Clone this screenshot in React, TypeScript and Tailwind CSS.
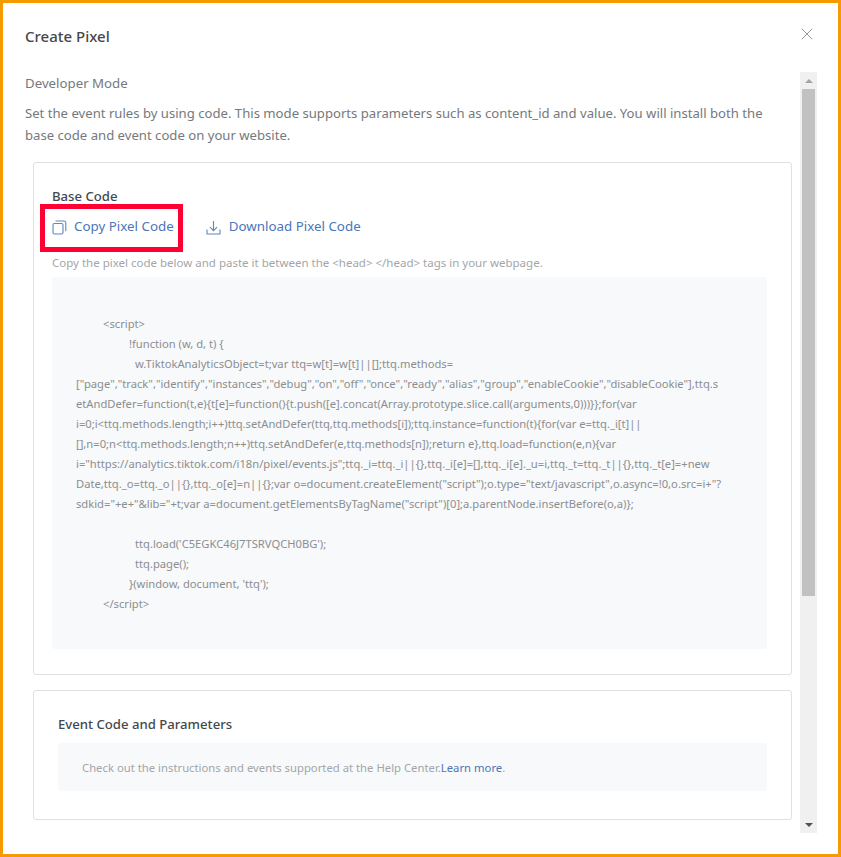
import { X } from 'lucide-react';

const codeLines: { text: string; indent: string }[] = [
  { text: '<script>', indent: 'pl-[51px]' },
  { text: '!function (w, d, t) {', indent: 'pl-[77px]' },
  { text: 'w.TiktokAnalyticsObject=t;var ttq=w[t]=w[t]||[];ttq.methods=', indent: 'pl-[83px]' },
  { text: '["page","track","identify","instances","debug","on","off","once","ready","alias","group","enableCookie","disableCookie"],ttq.s', indent: 'pl-[24px]' },
  { text: 'etAndDefer=function(t,e){t[e]=function(){t.push([e].concat(Array.prototype.slice.call(arguments,0)))}};for(var', indent: 'pl-[24px]' },
  { text: 'i=0;i<ttq.methods.length;i++)ttq.setAndDefer(ttq,ttq.methods[i]);ttq.instance=function(t){for(var e=ttq._i[t]||', indent: 'pl-[24px]' },
  { text: '[],n=0;n<ttq.methods.length;n++)ttq.setAndDefer(e,ttq.methods[n]);return e},ttq.load=function(e,n){var', indent: 'pl-[24px]' },
  { text: 'i="https://analytics.tiktok.com/i18n/pixel/events.js";ttq._i=ttq._i||{},ttq._i[e]=[],ttq._i[e]._u=i,ttq._t=ttq._t||{},ttq._t[e]=+new', indent: 'pl-[24px]' },
  { text: 'Date,ttq._o=ttq._o||{},ttq._o[e]=n||{};var o=document.createElement("script");o.type="text/javascript",o.async=!0,o.src=i+"?', indent: 'pl-[24px]' },
  { text: 'sdkid="+e+"&lib="+t;var a=document.getElementsByTagName("script")[0];a.parentNode.insertBefore(o,a)};', indent: 'pl-[24px]' },
  { text: '\u00a0', indent: 'pl-[24px]' },
  { text: "ttq.load('C5EGKC46J7TSRVQCH0BG');", indent: 'pl-[83px]' },
  { text: 'ttq.page();', indent: 'pl-[83px]' },
  { text: "}(window, document, 'ttq');", indent: 'pl-[77px]' },
  { text: '</script>', indent: 'pl-[51px]' },
];

function CopyIcon() {
  return (
    <svg className="translate-y-[2px]" width="15" height="15" viewBox="0 0 15 15" fill="none" stroke="#5f86c0" strokeWidth="1.1">
      <rect x="1" y="3.5" width="10" height="10.5" rx="1.5" />
      <path d="M3.5 1h8.5a1.8 1.8 0 0 1 1.8 1.8v8.4" />
    </svg>
  );
}

function DownloadIcon() {
  return (
    <svg className="translate-y-[2px]" width="15" height="15" viewBox="0 0 15 15" fill="none" stroke="#5f86c0" strokeWidth="1.1">
      <path d="M7.5 1v9.5M4 7.2l3.5 3.5L11 7.2" />
      <path d="M1 9.5v4.5h13V9.5" />
    </svg>
  );
}

export default function App() {
  return (
    <div className="flex h-[857px] w-[841px] flex-col border-[3px] border-[#f59b00] bg-white font-['Noto_Sans',sans-serif] text-[#75797d]">
      <div className="flex h-[69px] shrink-0 items-start justify-between pl-[22px] pr-[21px] pt-[23px]">
        <h1 className="text-[15px] leading-[20px] font-medium text-[#44484c]">Create Pixel</h1>
        <button className="mt-[-2px] text-[#8f8f8f]">
          <X size={20} strokeWidth={1.1} />
        </button>
      </div>

      <div className="flex min-h-0 flex-1">
        <div className="min-w-0 flex-1 overflow-hidden pl-[22px] pr-[8px]">
          <p className="text-[13.25px] leading-[22px]">Developer Mode</p>
          <p className="mt-[8px] pr-[10px] text-[13.13px] leading-[22px]">
            Set the event rules by using code. This mode supports parameters such as content_id and value. You will install both the base code and event code on your website.
          </p>

          <section className="ml-[8px] mt-[16px] h-[513px] rounded-[3px] border border-[#dde1e3] pl-[18px] pr-[24px] pt-[24px]">
            <h2 className="text-[13.15px] leading-[18px] font-medium text-[#44484c]">Base Code</h2>
            <div className="mt-[9px] flex h-[24px] items-center text-[13.35px] text-[#4a76b8]">
              <a className="relative flex items-center gap-[7px]">
                <CopyIcon />
                <span>Copy Pixel Code</span>
                <span className="absolute left-[-12px] top-[-12px] h-[48px] w-[143px] border-[5px] border-[#ff0033]" />
              </a>
              <a className="ml-[32px] flex items-center gap-[8px]">
                <DownloadIcon />
                <span>Download Pixel Code</span>
              </a>
            </div>
            <p className="mt-[17px] text-[11.5px] leading-[16px] text-[#a3a6a9]">
              Copy the pixel code below and paste it between the &lt;head&gt; &lt;/head&gt; tags in your webpage.
            </p>
            <div className="mt-[6px] h-[372px] rounded-[3px] bg-[#f8f9fa] pt-[37px] text-[11.2px] leading-[20px] text-[#8b8e91]">
              {codeLines.map((line, i) => (
                <div key={i} className={`whitespace-nowrap ${line.indent}`}>
                  {line.text}
                </div>
              ))}
            </div>
          </section>

          <section className="ml-[8px] mt-[15px] h-[130px] rounded-[3px] border border-[#dde1e3] pl-[24px] pr-[24px] pt-[24px]">
            <h2 className="text-[13.15px] leading-[18px] font-medium text-[#44484c]">Event Code and Parameters</h2>
            <div className="mt-[10px] flex h-[48px] items-center rounded-[3px] bg-[#f8f9fa] pl-[24px] pt-[2px] text-[11.3px] text-[#a3a6a9]">
              <span>Check out the instructions and events supported at the Help Center.</span>
              <a className="text-[#4a76b8]">Learn more</a>
              <span>.</span>
            </div>
          </section>
        </div>

        <div className="mb-[21px] mr-[21px] flex w-[17px] shrink-0 flex-col bg-[#f0f0f0]">
          <div className="flex h-[17px] items-center justify-center">
            <div className="h-0 w-0 border-x-[4px] border-b-[4px] border-x-transparent border-b-[#a3a3a3]" />
          </div>
          <div className="mx-[2px] h-[507px] bg-[#c1c1c1]" />
          <div className="flex-1" />
          <div className="flex h-[17px] items-center justify-center">
            <div className="h-0 w-0 border-x-[4px] border-t-[4px] border-x-transparent border-t-[#505050]" />
          </div>
        </div>
      </div>
    </div>
  );
}
